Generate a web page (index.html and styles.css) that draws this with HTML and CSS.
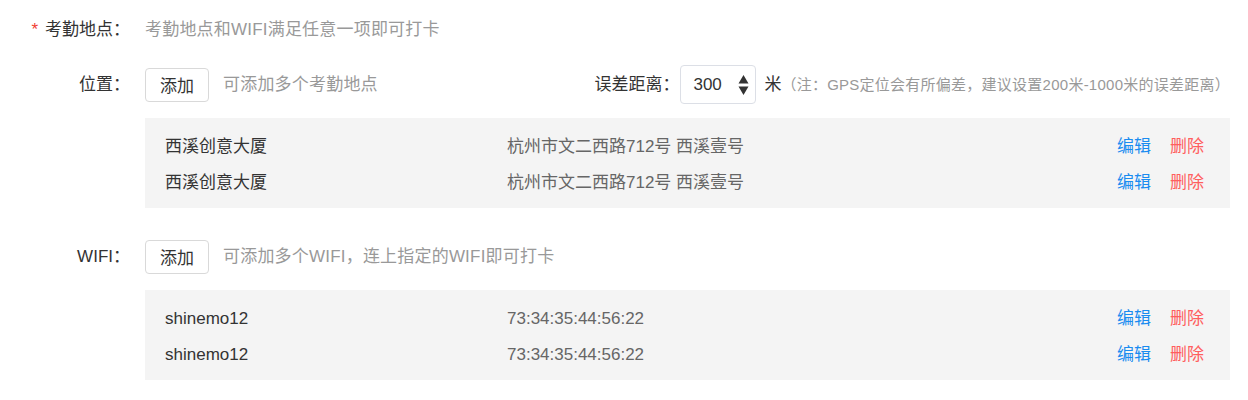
FILE: index.html
```html
<!DOCTYPE html>
<html lang="zh-CN">
<head>
  <meta charset="UTF-8" />
  <title>考勤地点设置</title>
  <link rel="stylesheet" href="styles.css">
</head>
<body>

<div class="form">
  <div class="field field-head">
    <div class="field-label"><span class="required">*</span>考勤地点：</div>
    <div class="field-body">
      <span class="hint">考勤地点和WIFI满足任意一项即可打卡</span>
    </div>
  </div>

  <div class="field field-place">
    <div class="field-label">位置：</div>
    <div class="field-body">
      <button class="btn">添加</button>
      <span class="hint">可添加多个考勤地点</span>
      <div class="range">
        <span class="range-label">误差距离：</span>
        <div class="num-input">
          <span class="num-value">300</span>
          <svg class="spinner" width="11" height="24" viewBox="0 0 11 24">
            <path d="M5.5 2 L10.5 10.5 L0.5 10.5 Z" fill="#333" />
            <path d="M5.5 22 L10.5 13.5 L0.5 13.5 Z" fill="#333" />
          </svg>
        </div>
        <span class="unit">米</span>
        <span class="note">（注：GPS定位会有所偏差，建议设置200米-1000米的误差距离）</span>
      </div>
    </div>
  </div>

  <div class="list" id="place-list"></div>

  <div class="field field-wifi">
    <div class="field-label">WIFI：</div>
    <div class="field-body">
      <button class="btn">添加</button>
      <span class="hint">可添加多个WIFI，连上指定的WIFI即可打卡</span>
    </div>
  </div>

  <div class="list" id="wifi-list"></div>
</div>

<script>
  const places = [
    { name: "西溪创意大厦", detail: "杭州市文二西路712号 西溪壹号" },
    { name: "西溪创意大厦", detail: "杭州市文二西路712号 西溪壹号" }
  ];

  const wifis = [
    { name: "shinemo12", detail: "73:34:35:44:56:22" },
    { name: "shinemo12", detail: "73:34:35:44:56:22" }
  ];

  function renderList(id, items) {
    const container = document.getElementById(id);
    items.forEach(item => {
      const row = document.createElement("div");
      row.className = "list-row";
      row.innerHTML = `<span class="list-name">${item.name}</span>
                       <span class="list-detail">${item.detail}</span>
                       <span class="list-actions"><a class="link-edit">编辑</a><a class="link-delete">删除</a></span>`;
      container.appendChild(row);
    });
  }

  renderList("place-list", places);
  renderList("wifi-list", wifis);
</script>

</body>
</html>
```

FILE: styles.css
```css
body {
  margin: 0;
  background: #fff;
  color: #333;
  font-family: "Liberation Sans", "Noto Sans CJK SC", sans-serif;
  font-size: 17px;
  line-height: 24px;
}

.form {
  padding: 10px 18px 0 0;
}

.field {
  display: flex;
  align-items: center;
  height: 39px;
}
.field-place {
  margin-top: 16px;
}
.field-wifi {
  margin-top: 29px;
}

.field-label {
  width: 130px;
  flex-shrink: 0;
  text-align: right;
  color: #333;
}
.required {
  color: #f04134;
  margin-right: 7px;
}

.field-body {
  flex: 1;
  display: flex;
  align-items: center;
  margin-left: 15px;
}

.hint {
  color: #999;
  letter-spacing: 0.2px;
}

.btn {
  height: 34px;
  width: 64px;
  padding: 0;
  margin-right: 14px;
  background: #fff;
  border: 1px solid #d9d9d9;
  border-radius: 4px;
  color: #333;
  font-family: inherit;
  font-size: 17px;
}

.range {
  margin-left: auto;
  display: flex;
  align-items: center;
}
.num-input {
  display: flex;
  align-items: center;
  justify-content: space-between;
  box-sizing: border-box;
  width: 76px;
  height: 39px;
  margin-left: 1px;
  padding: 0 6px 0 12px;
  border: 1px solid #dcdfe6;
  border-radius: 4px;
}
.unit {
  margin-left: 8px;
}
.note {
  color: #999;
  font-size: 15px;
  letter-spacing: 0.25px;
}

.list {
  margin: 14px 0 0 145px;
  padding: 11px 26px 7px 20px;
  background: #f4f4f4;
}
.list-row {
  display: flex;
  align-items: center;
  height: 36px;
}
.list-name {
  width: 342px;
  color: #333;
}
.list-detail {
  flex: 1;
  color: #666;
}
.list-actions {
  display: flex;
  gap: 19px;
}
.link-edit {
  color: #1a8cf0;
  cursor: pointer;
}
.link-delete {
  color: #ff5e5e;
  cursor: pointer;
}
```
